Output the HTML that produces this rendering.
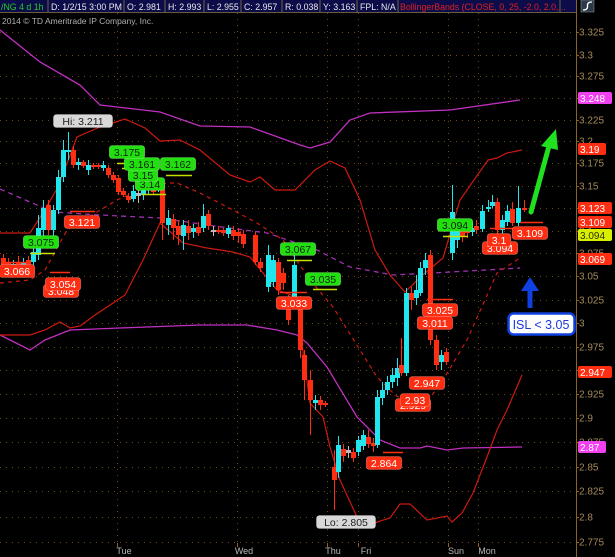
<!DOCTYPE html>
<html><head><meta charset="utf-8"><style>
html,body{margin:0;padding:0;background:#000;}
body{width:615px;height:557px;overflow:hidden;position:relative;font-family:"Liberation Sans",sans-serif;}
svg{position:absolute;left:0;top:0;}
</style></head><body>
<svg id="s" width="615" height="557" viewBox="0 0 615 557" xmlns="http://www.w3.org/2000/svg" font-family="Liberation Sans, sans-serif">
<rect width="615" height="557" fill="#000"/>
<g id="grid"></g>
<polyline fill="none" stroke="#c030c0" stroke-width="1.3" points="0,30 40,62 80,85 100,105 160,112 200,126 250,127 300,145 310,148 330,142 350,120 370,113 450,110 520,100"/>
<polyline fill="none" stroke="#c030c0" stroke-width="1.3" points="0,335 30,350 45,340 70,330 120,328 200,325 247,325 277,330 297,335 307,343 327,367 357,417 380,440 400,448 420,448 427,446 447,450 463,448 522,447"/>
<polyline fill="none" stroke="#a030b0" stroke-width="1.3" stroke-dasharray="5,4" points="0,189 53,212 100,215 160,218 207,225 267,233 317,250 350,267 393,275 433,273 520,268"/>
<polyline fill="none" stroke="#cc1a10" stroke-width="1.2" points="0,233 30,233 43,213 58,187 77,137 100,127 125,119 145,128 160,141 180,140 200,150 230,175 250,182 260,177 275,190 295,190 315,170 330,161 345,168 360,200 375,250 390,275 405,292 425,273 443,258 460,200 488,160 497,158 507,153 522,150"/>
<polyline fill="none" stroke="#cc1a10" stroke-width="1.2" points="0,335 30,335 45,330 60,322 70,328 80,326 95,315 110,305 125,295 143,260 160,223 183,243 207,248 233,252 250,257 277,290 297,297 300,330 310,403 323,417 330,447 340,480 357,517 370,527 377,522 390,518 400,504 410,504 427,520 447,516 452,522 462,513 473,493 487,457 497,430 507,410 522,375"/>
<polyline fill="none" stroke="#cc1a10" stroke-width="1.2" stroke-dasharray="4,4" points="0,283 30,280 45,270 67,230 117,200 140,190 167,183 177,183 200,193 233,210 257,223 283,240 310,280 333,307 360,350 377,377 395,395 420,410 440,385 467,340 497,273 520,258"/>
<g id="candles"></g>
<g id="lines"></g>
<g id="labels"></g>
<line x1="576.5" y1="0" x2="576.5" y2="557" stroke="#8a6420" stroke-width="1"/>
<g id="axis" fill="#a58a5a" font-size="10"></g>
<g id="rbox" font-size="10"></g>
<line x1="531" y1="212" x2="549" y2="146" stroke="#20e020" stroke-width="5" stroke-linecap="round"/>
<polygon points="541,146 556,129 558,150" fill="#20e020"/>
<line x1="530" y1="308" x2="530" y2="288" stroke="#1040e0" stroke-width="5"/>
<polygon points="521,291 530,277 539,291" fill="#1040e0"/>
<rect x="508.5" y="313.5" width="66" height="21" rx="5" fill="#fff" stroke="#1040e0" stroke-width="2.5"/>
<text x="541" y="329" font-size="12.5" fill="#1a3ad8" text-anchor="middle">ISL &lt; 3.05</text>
<g fill="#b8b8b8" font-size="9" text-anchor="middle">
<text x="124" y="554">Tue</text><text x="244" y="554">Wed</text><text x="333" y="554">Thu</text><text x="366" y="554">Fri</text><text x="456" y="554">Sun</text><text x="487" y="554">Mon</text>
</g>
<rect x="0" y="0" width="576" height="12.5" fill="#0c0c4a"/>
<g stroke="#8a7a40" stroke-width="0.8" fill="none">
<line x1="48" y1="0" x2="48" y2="12"/><line x1="124" y1="0" x2="124" y2="12"/><line x1="165" y1="0" x2="165" y2="12"/><line x1="204" y1="0" x2="204" y2="12"/><line x1="241" y1="0" x2="241" y2="12"/><line x1="282" y1="0" x2="282" y2="12"/><line x1="320" y1="0" x2="320" y2="12"/><line x1="357" y1="0" x2="357" y2="12"/><line x1="398" y1="0" x2="398" y2="12"/><line x1="560" y1="0" x2="560" y2="12"/>
<line x1="0" y1="12.5" x2="576" y2="12.5"/>
</g>
<g font-size="8.8" fill="#e8e8e8">
<text x="1" y="10" fill="#20d020">/NG 4 d 1h</text>
<text x="51" y="10">D: 1/2/15 3:00 PM</text>
<text x="127" y="10">O: 2.981</text>
<text x="168" y="10">H: 2.993</text>
<text x="207" y="10">L: 2.955</text>
<text x="244" y="10">C: 2.957</text>
<text x="285" y="10">R: 0.038</text>
<text x="323" y="10">Y: 3.163</text>
<text x="360" y="10">FPL: N/A</text>
<text x="400" y="10" fill="#e02020">BollingerBands (CLOSE, 0, 25, -2.0, 2.0,...</text>
</g>
<rect x="581" y="0" width="13" height="12" fill="#2a3a4a" stroke="#888" stroke-width="0.6"/>
<path d="M583,10 Q588,10 587.5,6 Q587,2 592,2" stroke="#fff" stroke-width="1.3" fill="none"/>
<text x="2" y="24" font-size="8.5" fill="#b0b0b0">2014 © TD Ameritrade IP Company, Inc.</text>
</svg>
<script>
var NS="http://www.w3.org/2000/svg";
function el(p,t,a,txt){var e=document.createElementNS(NS,t);for(var k in a)e.setAttribute(k,a[k]);if(txt!==undefined)e.textContent=txt;document.getElementById(p).appendChild(e);return e;}
var ticks=[["3.325",32],["3.3",55],["3.275",76],["3.25",98],["3.225",120],["3.2",141],["3.175",163],["3.15",186],["3.125",208],["3.1",231],["3.075",253],["3.05",276],["3.025",300],["3",323],["2.975",347],["2.95",370],["2.925",394],["2.9",418],["2.875",442],["2.85",467],["2.825",491],["2.8",517],["2.775",542]];
ticks.forEach(function(t){
 el("grid","line",{x1:0,y1:t[1]+.5,x2:576,y2:t[1]+.5,stroke:"#6a4a10","stroke-width":1,"stroke-dasharray":"1,5"});
 el("axis","text",{x:579,y:t[1]+3.5},t[0]);
 el("axis","line",{x1:576,y1:t[1]+.5,x2:579,y2:t[1]+.5,stroke:"#8a6420"});
});
[117,237,327,358,448,478].forEach(function(x){
 el("grid","line",{x1:x+.5,y1:13,x2:x+.5,y2:545,stroke:"#6a4a10","stroke-width":1,"stroke-dasharray":"1,5"});
 el("grid","line",{x1:x+.5,y1:543,x2:x+.5,y2:547,stroke:"#8a6420"});
});
var C=[
[3,258,266,254,270,'r'],[8,262,268,258,272,'r'],[13,264,270,260,274,'c'],[18,262,270,256,276,'r'],[23,262,268,258,272,'c'],[28,260,270,256,274,'r'],[33,252,262,246,268,'c'],[38,228,255,215,260,'c'],
[43,208,230,200,240,'c'],[48,205,230,200,235,'r'],[53,210,230,205,236,'c'],[58,177,210,170,214,'c'],[63,150,177,140,182,'c'],[68,150,152,132,160,'c'],[73,150,165,146,168,'r'],[78,162,165,158,170,'c'],[83,162,166,160,168,'r'],[88,165,170,160,175,'c'],[93,165,167,163,169,'r'],[98,165,167,163,169,'r'],[103,165,168,161,171,'c'],[108,168,175,165,178,'r'],[113,175,180,172,183,'r'],[118,178,192,175,195,'r'],[123,191,195,188,197,'r'],[128,196,200,193,203,'r'],[133,191,199,185,202,'c'],[138,193,196,184,203,'g'],[143,184,195,175,200,'c'],[148,184,190,178,195,'c'],[153,180,192,176,195,'r'],[158,184,190,180,192,'c'],
[162,184,223,180,240,'r'],[168,218,225,210,235,'c'],[173,219,228,214,240,'r'],[178,226,235,220,245,'r'],[183,225,236,220,250,'c'],[188,226,233,220,240,'r'],[193,228,232,224,238,'c'],[198,227,233,222,236,'r'],[203,216,228,204,232,'c'],[208,214,226,210,230,'r'],[213,230,232,226,236,'g'],[218,230,232,226,234,'r'],[223,230,233,228,236,'r'],[228,228,234,225,238,'c'],[233,230,236,226,240,'r'],[238,232,236,228,243,'r'],[243,234,244,230,248,'r'],
[255,235,262,232,265,'r'],[260,262,268,258,272,'r'],[268,255,287,245,292,'c'],[273,260,282,255,287,'c'],[278,262,290,258,295,'r'],[283,273,283,268,290,'r'],[288,300,320,295,325,'r'],[294,265,300,255,305,'c'],[300,300,350,296,358,'r'],[304,355,380,350,400,'r'],[310,380,400,370,435,'r'],[315,400,403,395,410,'c'],[320,400,405,396,410,'r'],[325,403,405,401,407,'r'],
[334,467,480,450,510,'r'],[338,445,472,436,478,'c'],[343,449,456,444,462,'r'],[348,450,453,446,458,'g'],[353,452,458,448,462,'r'],[358,440,452,436,456,'c'],[363,435,446,430,450,'c'],[368,437,444,430,448,'r'],[373,443,446,438,452,'r'],[377,397,445,390,448,'c'],[382,390,398,382,405,'c'],[387,382,390,376,395,'c'],[392,375,382,368,388,'c'],[397,368,378,358,386,'c'],[401,365,373,338,376,'r'],[406,293,373,288,376,'c'],[411,293,300,287,310,'r'],[416,290,298,275,305,'c'],[420,268,293,262,296,'c'],[425,260,268,253,275,'c'],[430,255,340,250,345,'r'],[436,340,365,335,370,'r'],[441,355,362,350,370,'c'],[446,352,362,348,365,'r'],
[452,212,253,185,260,'c'],[457,228,240,220,248,'c'],[462,230,237,225,242,'r'],[467,227,233,222,238,'r'],[472,228,232,222,236,'c'],[476,226,230,220,234,'r'],[482,211,229,205,232,'c'],[488,207,209,200,212,'c'],[492,202,206,195,208,'c'],[497,202,230,198,235,'r'],[502,220,230,215,234,'c'],[507,211,222,205,226,'c'],[512,209,223,202,226,'r'],[518,208,223,186,226,'c'],[524,208,210,200,212,'r']
];
var col={c:"#22e6ee",r:"#ff2e12",g:"#bbbbbb"};
C.forEach(function(c){
 el("candles","line",{x1:c[0]+.5,y1:c[3],x2:c[0]+.5,y2:c[4],stroke:col[c[5]],"stroke-width":1});
 el("candles","rect",{x:c[0]-2,y:c[1],width:5,height:Math.max(2,c[2]-c[1]),fill:col[c[5]]});
});
var L=[[30,55,253,"#c8e000"],[166,192,175,"#c8e000"],[142,166,194,"#c8e000"],[117,126,163,"#c8e000"],[122,131,168,"#c8e000"],[128,136,174,"#c8e000"],[287,312,260,"#c8e000"],[313,337,289,"#c8e000"],[443,468,236,"#c8e000"],
[70,95,211,"#ff2e12"],[50,70,272,"#ff2e12"],[5,30,262,"#ff2e12"],[280,307,292,"#ff2e12"],[427,453,299,"#ff2e12"],[383,403,452,"#ff2e12"],[520,543,222,"#ff2e12"],[490,518,228,"#ff2e12"]];
L.forEach(function(l){el("lines","line",{x1:l[0],y1:l[2]+.5,x2:l[1],y2:l[2]+.5,stroke:l[3],"stroke-width":1.5});});
function lab(t,x,y,bg,fg){var w=t.length*5.9+6;
 el("labels","rect",{x:x-w/2,y:y-6.5,width:w,height:13,rx:3,fill:bg,stroke:"rgba(255,255,255,.35)","stroke-width":.6});
 el("labels","text",{x:x,y:y+4,"font-size":10.5,fill:fg,"text-anchor":"middle"},t);}
var R="#ff2e12",G="#22e010",W="#fff",K="#102010";
lab("3.048",61,291,R,W);lab("3.054",63,284,R,W);lab("3.066",17,271,R,W);lab("3.121",82,222,R,W);
lab("2.929",413,405,R,W);lab("2.93",415,400,R,W);lab("2.947",427,383,R,W);lab("2.864",384,463,R,W);
lab("3.033",294,303,R,W);lab("3.025",440,310,R,W);lab("3.011",435,323,R,W);
lab("3.094",500,248,R,W);lab("3.1",499,240,R,W);lab("3.109",530,233,R,W);
lab("3.075",41,242,G,K);lab("3.14",150,184,G,K);lab("3.15",143,175,G,K);lab("3.161",142,164,G,K);lab("3.175",127,152,G,K);lab("3.162",178,164,G,K);
lab("3.067",298,249,G,K);lab("3.035",323,279,G,K);lab("3.094",455,225,G,K);
lab("Hi: 3.211",83,121,"#d8d8d8","#202020");lab("Lo: 2.805",346,522,"#d8d8d8","#202020");
function rb(t,y,bg,fg){el("rbox","rect",{x:578,y:y-6,width:t.length*6+4,height:12,rx:2,fill:bg});
 el("rbox","text",{x:580,y:y+4,fill:fg},t);}
rb("3.248",98,"#f040f0","#fff");rb("3.19",149,R,"#fff");rb("3.123",208,R,"#fff");rb("3.109",222,R,"#fff");rb("3.094",235,"#d8f000","#303000");rb("3.069",259,R,"#fff");rb("2.947",372,R,"#fff");rb("2.87",447,"#f040f0","#fff");
</script>
</body></html>
